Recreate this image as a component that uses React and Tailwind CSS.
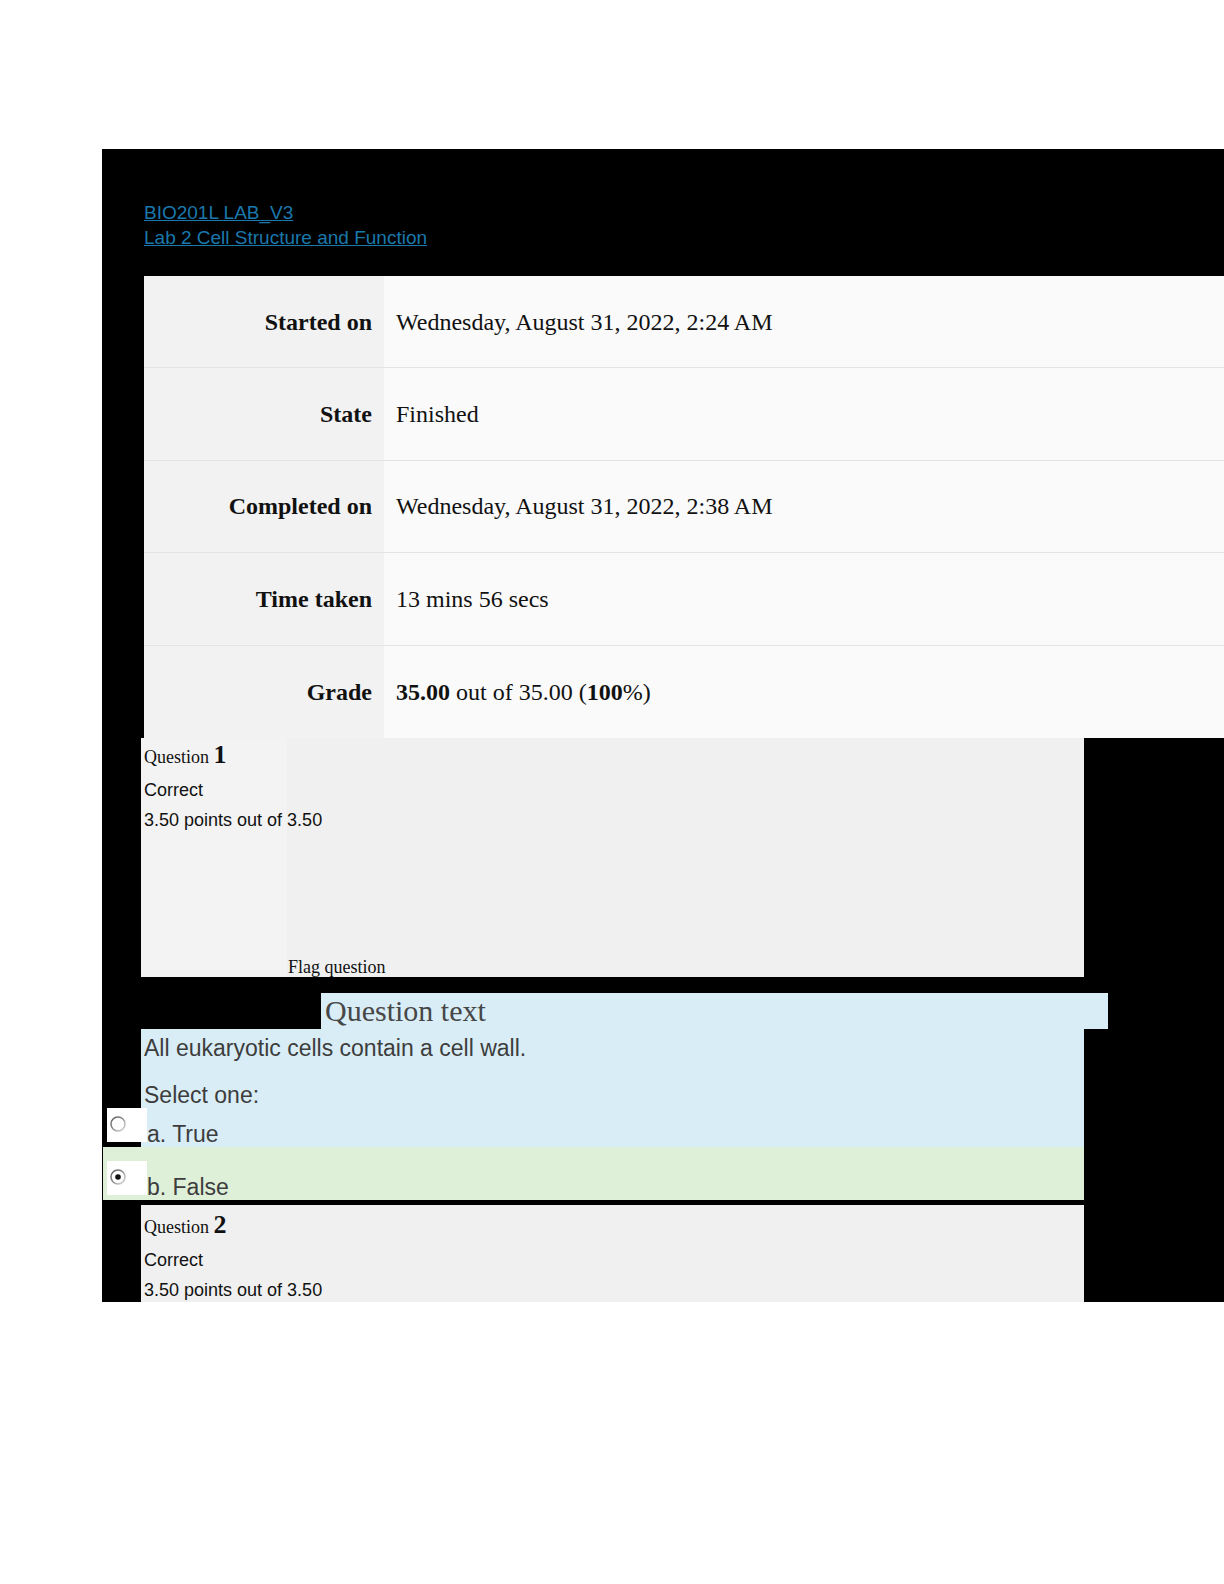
import React from "react";

function Radio({ checked }) {
  return (
    <svg width="40" height="34" viewBox="0 0 40 34" className="block">
      <defs>
        <linearGradient id={checked ? "rg2" : "rg1"} x1="0" y1="0" x2="1" y2="1">
          <stop offset="0" stopColor="#555" />
          <stop offset="0.55" stopColor="#999" />
          <stop offset="1" stopColor="#dcdcdc" />
        </linearGradient>
      </defs>
      <circle cx="11" cy="16" r="7" fill="#fdfdfd" stroke={checked ? "url(#rg2)" : "url(#rg1)"} strokeWidth="1.5" />
      {checked && <circle cx="11" cy="16" r="2.8" fill="#111" />}
    </svg>
  );
}

const rows = [
  ["Started on", <span>Wednesday, August 31, 2022, 2:24 AM</span>],
  ["State", <span>Finished</span>],
  ["Completed on", <span>Wednesday, August 31, 2022, 2:38 AM</span>],
  ["Time taken", <span>13 mins 56 secs</span>],
  [
    "Grade",
    <span>
      <b>35.00</b> out of 35.00 (<b>100</b>%)
    </span>,
  ],
];

export default function App() {
  return (
    <div className="w-[1224px] h-[1584px] bg-white pt-[149px] pl-[102px]">
      <div className="bg-black w-[1122px] h-[1153px] overflow-hidden flex flex-col">
        {/* links */}
        <div className="pt-[51px] pl-[42px] font-['Liberation_Sans',sans-serif] text-[19px] leading-[25px] text-[#1a78ad]">
          <div>
            <a href="#" className="underline">BIO201L LAB_V3</a>
          </div>
          <div>
            <a href="#" className="underline">Lab 2 Cell Structure and Function</a>
          </div>
        </div>

        {/* summary table */}
        <div className="mt-[26px] ml-[42px] w-[1080px] font-['Liberation_Serif',serif] text-[24px] text-[#111] shrink-0">
          {rows.map(([label, value], i) => (
            <div
              key={label}
              className={
                "flex h-[92.4px] " +
                (i < rows.length - 1 ? "border-b border-[#e4e4e4]" : "")
              }
            >
              <div className="w-[240px] bg-[#f2f2f2] flex items-center justify-end pr-[12px] font-bold">
                {label}
              </div>
              <div className="flex-1 bg-[#fafafa] flex items-center pl-[12px]">{value}</div>
            </div>
          ))}
        </div>

        {/* question 1 info */}
        <div className="ml-[39px] w-[943px] h-[239px] flex shrink-0">
          <div className="w-[146px] bg-[#f3f3f3] pt-[2px] pl-[3px] whitespace-nowrap relative z-10 text-[#111]">
            <div className="font-['Liberation_Serif',serif] text-[18px] leading-[30px]">
              Question <span className="font-bold text-[26px]">1</span>
            </div>
            <div className="font-['Liberation_Sans',sans-serif] text-[18px] leading-[30px] mt-[3px]">Correct</div>
            <div className="font-['Liberation_Sans',sans-serif] text-[18px] leading-[30px]">3.50 points out of 3.50</div>
          </div>
          <div className="flex-1 bg-[#f0f0f0] flex items-end pl-[1px]">
            <div className="font-['Liberation_Serif',serif] text-[18px] leading-[20px] text-[#111]">Flag question</div>
          </div>
        </div>

        {/* question text header */}
        <div className="mt-[16px] ml-[219px] w-[787px] h-[36px] bg-[#d9edf7] pl-[4px] font-['Liberation_Serif',serif] text-[30px] leading-[36px] text-[#474747] shrink-0">
          Question text
        </div>

        {/* question body */}
        <div className="ml-[39px] w-[943px] bg-[#d9edf7] pt-[6px] font-['Liberation_Sans',sans-serif] text-[23px] text-[#3d3d3d] shrink-0">
          <div className="pl-[3px] leading-[26px]">All eukaryotic cells contain a cell wall.</div>
          <div className="pl-[3px] leading-[24px] mt-[22px]">Select one:</div>
          <div className="-ml-[34px] mt-[1px] flex items-start">
            <div className="w-[40px] h-[34px] bg-white">
              <Radio checked={false} />
            </div>
            <div className="pt-[13px] leading-[26px]">a. True</div>
          </div>
        </div>

        {/* correct answer row */}
        <div className="ml-[1px] w-[981px] h-[53px] bg-[#dff0d8] flex items-start font-['Liberation_Sans',sans-serif] text-[23px] text-[#3d3d3d] shrink-0">
          <div className="ml-[4px] mt-[14px] w-[40px] h-[34px] bg-white">
            <Radio checked={true} />
          </div>
          <div className="pt-[27px] leading-[26px]">b. False</div>
        </div>

        {/* question 2 info */}
        <div className="mt-[5px] ml-[39px] w-[943px] flex-1 bg-[#f0f0f0] pt-[5px] pl-[3px] whitespace-nowrap text-[#111]">
          <div className="font-['Liberation_Serif',serif] text-[18px] leading-[30px]">
            Question <span className="font-bold text-[26px]">2</span>
          </div>
          <div className="font-['Liberation_Sans',sans-serif] text-[18px] leading-[30px] mt-[3px]">Correct</div>
          <div className="font-['Liberation_Sans',sans-serif] text-[18px] leading-[30px]">3.50 points out of 3.50</div>
        </div>
      </div>
    </div>
  );
}
